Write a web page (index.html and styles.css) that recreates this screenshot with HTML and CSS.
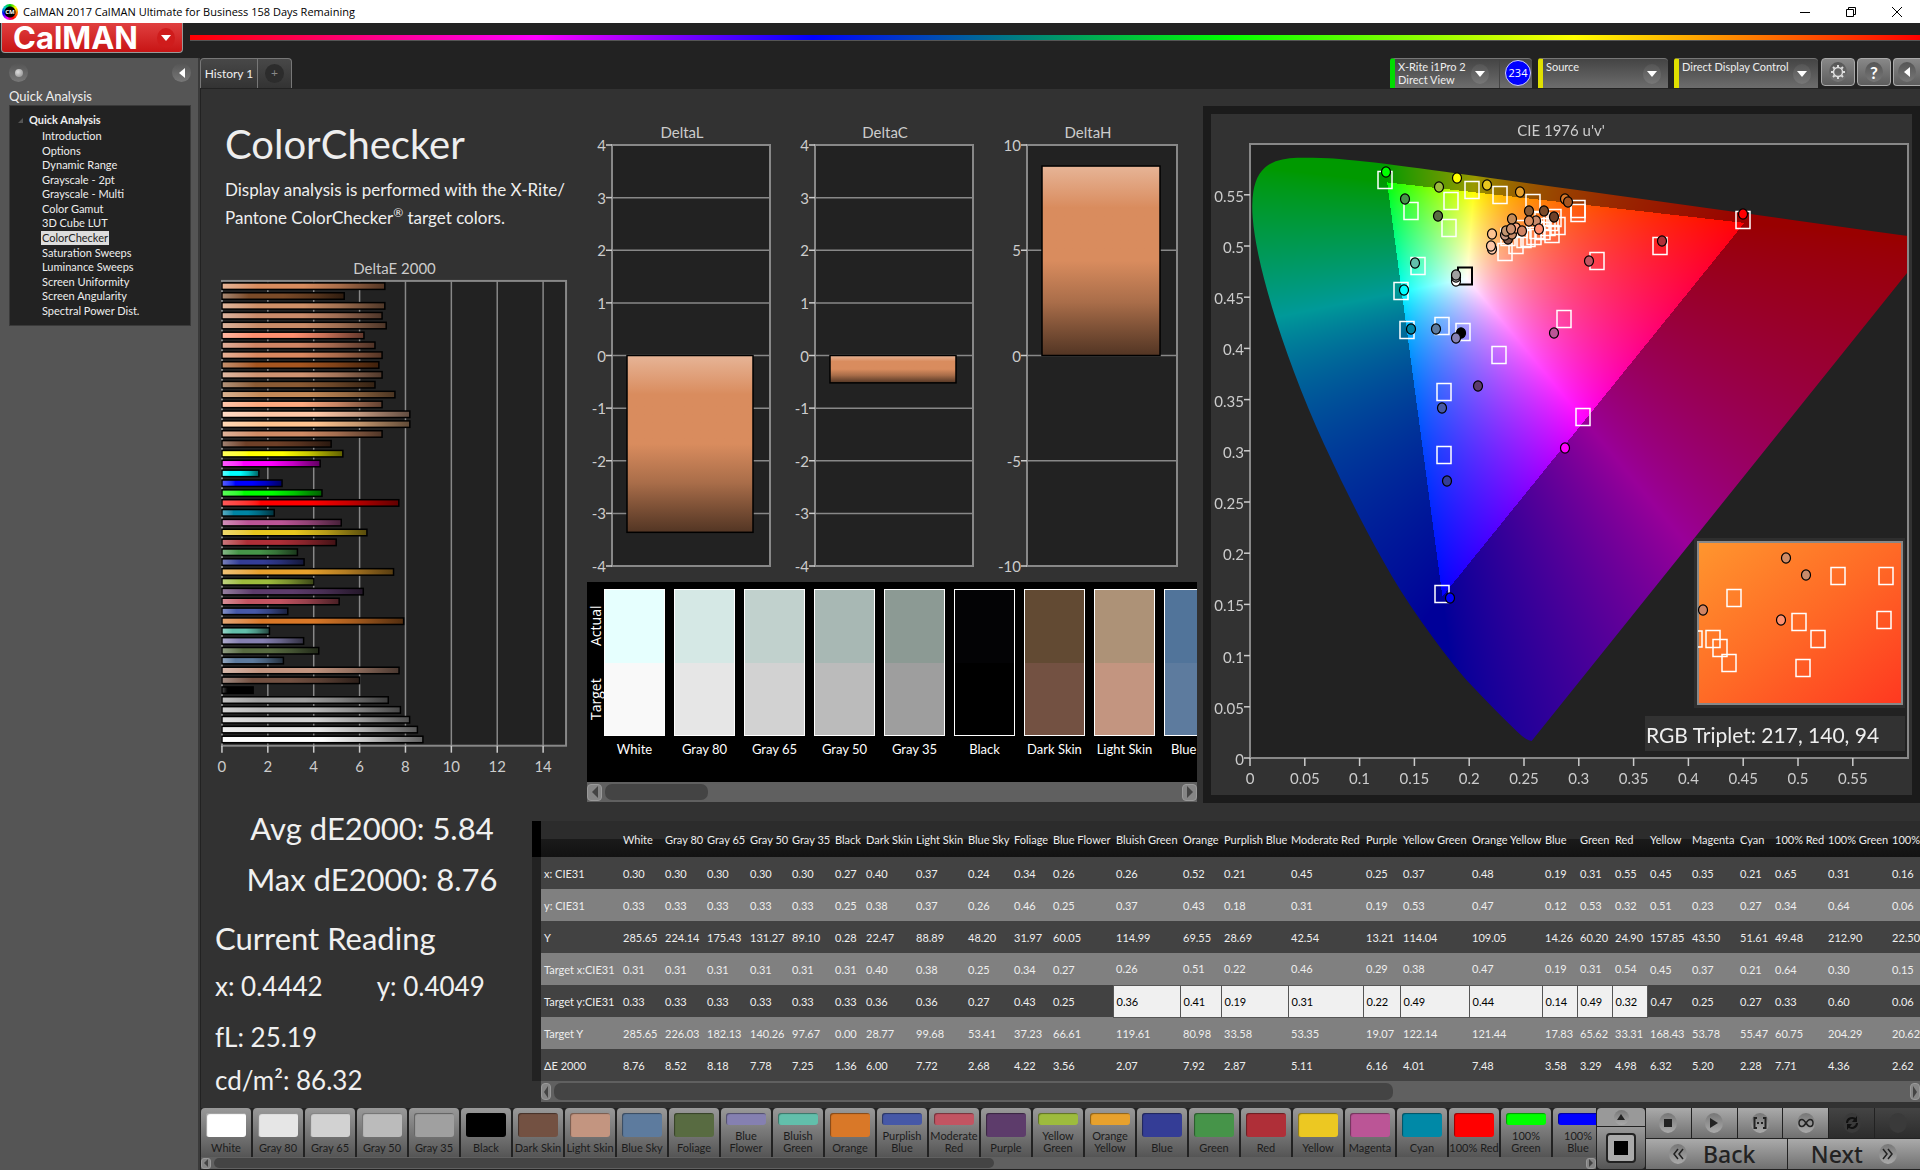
FILE: index.html
```html
<!DOCTYPE html>
<html lang="en">
<head>
<meta charset="utf-8">
<title>CalMAN 2017 CalMAN Ultimate for Business 158 Days Remaining</title>
<link rel="stylesheet" href="styles.css">
</head>
<body>
<header class="titlebar">
  <span class="app-icon">CM</span>
  <span class="title">CalMAN 2017 CalMAN Ultimate for Business 158 Days Remaining</span>
  <div class="window-buttons">
    <button aria-label="Minimize"><svg width="12" height="12"><path d="M1 6.500H11" stroke="#000" fill="none"/></svg></button>
    <button aria-label="Restore"><svg width="12" height="12"><path d="M1.500 3.500h7v7h-7zM3.500 3.500v-2h7v7h-2" stroke="#000" fill="none"/></svg></button>
    <button aria-label="Close"><svg width="12" height="12"><path d="M1 1L11 11M11 1L1 11" stroke="#000" fill="none"/></svg></button>
  </div>
</header>
<div class="brandbar">
  <button class="brand"><span>CalMAN</span><i class="knob"><svg width="10" height="6"><path d="M0 0h10L5 6z" fill="#fff"/></svg></i></button>
  <div class="rainbow"></div>
</div>
<div class="workspace">
  <aside class="sidebar">
    <div class="sidebar-top">
      <button class="round-btn" aria-label="Pin"><i class="led"></i></button>
      <button class="round-btn" aria-label="Collapse"><svg width="6" height="10"><path d="M6 0v10L0 5z" fill="#fff"/></svg></button>
    </div>
    <h2>Quick Analysis</h2>
    <nav class="tree">
      <strong><svg width="5" height="5"><path d="M5 0v5H0z" fill="#555"/></svg>Quick Analysis</strong>
      <ul>
        <li><a href="#">Introduction</a></li>
        <li><a href="#">Options</a></li>
        <li><a href="#">Dynamic Range</a></li>
        <li><a href="#">Grayscale - 2pt</a></li>
        <li><a href="#">Grayscale - Multi</a></li>
        <li><a href="#">Color Gamut</a></li>
        <li><a href="#">3D Cube LUT</a></li>
        <li><a href="#" class="current">ColorChecker</a></li>
        <li><a href="#">Saturation Sweeps</a></li>
        <li><a href="#">Luminance Sweeps</a></li>
        <li><a href="#">Screen Uniformity</a></li>
        <li><a href="#">Screen Angularity</a></li>
        <li><a href="#">Spectral Power Dist.</a></li>
      </ul>
    </nav>
  </aside>
  <main class="main">
    <div class="topbar">
      <div class="tabs">
        <button class="tab">History 1</button>
        <button class="tab tab-add"><i>+</i></button>
      </div>
      <div class="devices">
        <div class="device meter">
          <button class="device-menu"><span>X-Rite i1Pro 2<br>Direct View</span><i class="knob"><svg width="10" height="6"><path d="M0 0h10L5 6z" fill="#fff"/></svg></i></button>
          <span class="badge">234</span>
        </div>
        <div class="device source">
          <button class="device-menu"><span>Source</span><i class="knob"><svg width="10" height="6"><path d="M0 0h10L5 6z" fill="#fff"/></svg></i></button>
        </div>
        <div class="device display">
          <button class="device-menu"><span>Direct Display Control</span><i class="knob"><svg width="10" height="6"><path d="M0 0h10L5 6z" fill="#fff"/></svg></i></button>
        </div>
        <button class="tool" aria-label="Settings"><i class="knob"><svg width="16" height="16" viewBox="0 0 16 16"><circle cx="8" cy="8" r="4.500" fill="none" stroke="#ddd" stroke-width="1.500"/><g stroke="#ddd" stroke-width="2"><path d="M8 1v2M8 13v2M1 8h2M13 8h2M3 3l1.500 1.500M11.500 11.500L13 13M3 13l1.500-1.500M11.500 4.500L13 3"/></g></svg></i></button>
        <button class="tool" aria-label="Help"><i class="knob">?</i></button>
        <button class="tool tool-cut" aria-label="Collapse"><i class="knob"><svg width="6" height="10"><path d="M6 0v10L0 5z" fill="#fff"/></svg></i></button>
      </div>
    </div>

    <div class="page">
      <div class="upper">
        <section class="intro">
          <h1>ColorChecker</h1>
          <p>Display analysis is performed with the X-Rite/<br>Pantone ColorChecker<sup>®</sup> target colors.</p>
          <svg id="deltae" class="chart" viewBox="0 0 387 540"></svg>
        </section>
        <section class="middle">
          <svg id="deltas" class="chart" viewBox="0 0 610 464"></svg>
          <div class="strip">
            <div class="strip-body">
              <div class="strip-side"><span>Actual</span><span>Target</span></div>
              <div class="swatches" id="swatches"></div>
            </div>
            <div class="scrollbar strip-scroll"><button aria-label="Scroll left"><svg width="6" height="12"><path d="M6 0v12L0 6z"/></svg></button><div class="track"><div class="thumb"></div></div><button aria-label="Scroll right"><svg width="6" height="12"><path d="M0 0v12L6 6z"/></svg></button></div>
          </div>
        </section>
        <section class="cie">
          <canvas id="gamut" width="658" height="614"></canvas>
          <svg id="cie" class="chart" viewBox="0 0 701 681"></svg>
        </section>
      </div>

      <div class="lower">
        <section class="stats">
          <p class="big">Avg dE2000: 5.84</p>
          <p class="big">Max dE2000: 8.76</p>
          <p class="heading">Current Reading</p>
          <p class="reading"><span>x: 0.4442</span><span>y: 0.4049</span></p>
          <p class="reading lum">fL: 25.19</p>
          <p class="reading">cd/m²: 86.32</p>
        </section>
        <section class="results">
          <div class="table-wrap"><table id="results"></table></div>
          <div class="scrollbar table-scroll"><button aria-label="Scroll left"><svg width="4" height="12"><path d="M4 0v12L0 6z"/></svg></button><div class="track"><div class="thumb"></div></div><button aria-label="Scroll right"><svg width="4" height="12"><path d="M0 0v12L4 6z"/></svg></button></div>
        </section>
      </div>
    </div>

    <footer class="bottom">
      <div class="patches">
        <div class="patch-row" id="patches"></div>
        <div class="scrollbar patch-scroll"><button aria-label="Scroll left"><svg width="4" height="8"><path d="M4 0v8L0 4z"/></svg></button><div class="track"><div class="thumb"></div></div><button aria-label="Scroll right"><svg width="4" height="8"><path d="M0 0v8L4 4z"/></svg></button></div>
      </div>
      <div class="window-ctl">
        <button class="up" aria-label="Expand"><i class="knob"><svg width="8" height="6"><path d="M0 6h8L4 0z" fill="#222"/></svg></i></button>
        <button class="pattern" aria-label="Pattern window"><i></i></button>
      </div>
      <div class="transport">
        <div class="play-row">
          <button aria-label="Stop"><i class="knob"><svg width="10" height="10"><path d="M1 1h8v8H1z" fill="#222"/></svg></i></button>
          <button aria-label="Play"><i class="knob"><svg width="10" height="12"><path d="M1 1v10l8-5z" fill="#222"/></svg></i></button>
          <button aria-label="Read series"><i class="knob"><svg width="14" height="12"><path d="M4 1H1.500v10H4M10 1h2.500v10H10" stroke="#222" stroke-width="2" fill="none"/><path d="M4 6h2M8 6h2" stroke="#222" stroke-width="2"/></svg></i></button>
          <button aria-label="Read continuous"><i class="knob"><svg width="16" height="10"><path d="M8 5C6 2 5 1.500 4 1.500a3 3.500 0 0 0 0 7C5 8.500 6 8 8 5s3-3.500 4-3.500a3 3.500 0 0 1 0 7c-1 0-2-.5-4-3.500z" stroke="#222" stroke-width="1.500" fill="none"/></svg></i></button>
          <button class="off" aria-label="Refresh"><i class="knob"><svg width="14" height="14"><path d="M2 7a5 5 0 0 1 9-3M12 7a5 5 0 0 1-9 3" stroke="#111" stroke-width="2" fill="none"/><path d="M12 0v6H7zM2 14V8h5z" fill="#111"/></svg></i></button>
          <button class="off" aria-label="Record"><i class="knob"></i></button>
        </div>
        <div class="nav-row">
          <button><i class="knob"><svg width="12" height="12"><path d="M6 1L2 6l4 5M11 1L7 6l4 5" stroke="#222" stroke-width="1.500" fill="none"/></svg></i>Back</button>
          <button>Next<i class="knob"><svg width="12" height="12"><path d="M1 1l4 5-4 5M6 1l4 5-4 5" stroke="#222" stroke-width="1.500" fill="none"/></svg></i></button>
        </div>
      </div>
    </footer>
  </main>
</div>
<script src="app.js"></script>
</body>
</html>
```

FILE: styles.css
```css
* { box-sizing: border-box; }
body {
  margin: 0; min-height: 100vh; display: flex; flex-direction: column; overflow-x: hidden;
  background: #222; color: #eee;
  font-family: Lato, sans-serif; font-size: 13px;
}
button { font: inherit; color: inherit; border: 0; padding: 0; margin: 0; background: none; }
h1, h2, p, ul { margin: 0; padding: 0; font-weight: normal; list-style: none; }
i { font-style: normal; }
a { color: inherit; text-decoration: none; }
svg { display: block; flex: none; }

.titlebar { height: 23px; background: #fff; color: #000; display: flex; align-items: center; font-family: "Open Sans", sans-serif; font-size: 11px; }
.app-icon {
  width: 16px; height: 16px; margin: 0 5px 0 2px; border-radius: 50%; color: #fff; font-size: 6px; font-weight: bold;
  display: flex; align-items: center; justify-content: center;
  background: radial-gradient(circle, #000 5px, transparent 6px), conic-gradient(#0c0, #ff0, #f60, #f00, #f0f, #00f, #0cc, #0c0);
}
.title { flex: 1; }
.window-buttons { display: flex; }
.window-buttons button { width: 46px; height: 22px; display: flex; align-items: center; justify-content: center; }

.brandbar { height: 35px; display: flex; padding-left: 1px; }
.brand {
  width: 182px; height: 30px; display: flex; align-items: center; justify-content: space-between; padding: 0 7px 0 11px;
  background: linear-gradient(#e04040, #c81414); border: 1px solid #999; border-top: 0; border-radius: 0 0 4px 4px;
  font-family: Inter, sans-serif; font-weight: 700; font-size: 31px; line-height: 30px; color: #fff;
}
.knob {
  width: 18px; height: 20px; border-radius: 50%; display: flex; flex: none; align-items: center; justify-content: center;
  background: linear-gradient(#555, #777);
}
.brand .knob { background: #cf1c1c; }
.rainbow { flex: 1; height: 6px; margin: 12px 0 0 7px; background: linear-gradient(90deg, #f00, #f0f 20%, #00f 36%, #0f0 60%, #ff0 80%, #f00); border-bottom: 1px solid #555; }

.workspace { flex: 1; display: flex; }
.sidebar { width: 200px; flex: none; background: #555; padding: 5px 7px 5px 9px; border-right: 2px solid #3a3a3a; }
.sidebar-top { display: flex; justify-content: space-between; }
.round-btn { width: 19px; height: 19px; border-radius: 50%; display: flex; align-items: center; justify-content: center; background: linear-gradient(#555, #777); }
.led { width: 8px; height: 8px; border-radius: 50%; background: radial-gradient(circle at 3px 3px, #ddd, #888); }
.sidebar h2 { font-size: 13px; line-height: 17px; margin: 6px 0 0; }
.tree { height: 221px; background: #222; border: 1px solid #3a3a3a; padding: 5px 0 7px 8px; display: flex; flex-direction: column; font-size: 11px; }
.tree strong { display: flex; align-items: center; gap: 6px; line-height: 18px; }
.tree ul { flex: 1; display: flex; flex-direction: column; justify-content: space-between; padding: 0 0 0 23px; }
.tree li { line-height: 14px; }
.tree a { padding: 0 1px; display: inline-block; }
.tree .current { background: #ddd; color: #222; }

.main { flex: 1; min-width: 0; display: flex; flex-direction: column; }
.topbar { height: 30px; display: flex; justify-content: space-between; overflow: hidden; }
.tabs, .devices { display: flex; }
.tab { width: 58px; border: 1px solid #777; border-bottom: 0; border-radius: 4px 0 0 0; background: linear-gradient(#484848, #333); font-size: 12px; white-space: nowrap; }
.tab-add { width: 34px; border-left: 0; border-radius: 0 4px 0 0; display: flex; align-items: center; justify-content: center; color: #888; }
.tab-add i { width: 19px; height: 19px; line-height: 18px; border-radius: 50%; background: #2c2c2c; }
.device { display: flex; height: 30px; background: linear-gradient(#444, #6d6d6d); border-top: 1px solid #777; border-left: 5px solid #e0e000; border-radius: 3px 4px 0 0; margin-right: 6px; }
.meter { width: 142px; border-left-color: #0d0; }
.source { width: 130px; }
.display { width: 144px; margin-right: 3px; }
.device-menu { flex: 1; display: flex; justify-content: space-between; align-items: flex-start; text-align: left; font-size: 11px; line-height: 13px; padding: 1px 7px 0 3px; white-space: nowrap; }
.meter .device-menu { padding-right: 10px; border-right: 1px solid #444; }
.device-menu .knob { margin: 4px 0 0; }
.badge { width: 26px; height: 26px; flex: none; margin: 1px 1px 0 5px; border-radius: 50%; background: #00f; border: 1px solid #ccf; color: #fff; font: 11px/24px "Open Sans", sans-serif; text-align: center; }
.tool { width: 34px; height: 28px; margin-right: 2px; display: flex; align-items: center; justify-content: center; border: 1px solid #aaa; border-radius: 4px; background: linear-gradient(#888, #5d5d5d); font-weight: bold; font-size: 17px; color: #fff; }
.tool-cut { width: 27px; margin: 0; border-right: 0; border-radius: 4px 0 0 4px; }

.page { flex: 1; background: #323232; border-top: 1px solid #222; border-left: 1px solid #222; padding-bottom: 6px; }
.upper { display: grid; grid-template-columns: minmax(0, 380fr) minmax(0, 610fr) minmax(0, 717fr); column-gap: 6px; padding-top: 17px; }
.chart { width: 100%; height: auto; overflow: visible; }
.intro { padding-top: 8px; margin-right: -6px; }
.intro h1 { font-size: 40px; line-height: 60px; padding-left: 24px; }
.intro p { font-size: 17px; line-height: 28px; padding-left: 24px; white-space: nowrap; margin: 2px 0 18px; }
.intro sup { font-size: 12px; line-height: 0; }
.middle { padding-top: 12px; }
.strip { background: #000; overflow: hidden; }
.strip-body { height: 200px; display: flex; padding-top: 7px; }
.strip-side { width: 17px; height: 147px; flex: none; display: flex; flex-direction: column; justify-content: space-between; align-items: center; }
.strip-side span { writing-mode: vertical-rl; transform: rotate(180deg); height: 73px; text-align: center; font: 14px/17px "Open Sans", sans-serif; color: #fff; }
.swatches { display: flex; gap: 9px; flex: 1; min-width: 0; overflow: hidden; }
.swatch { width: 61px; flex: none; display: flex; flex-direction: column; text-align: center; font-size: 13px; line-height: 18px; color: #fff; white-space: nowrap; }
.swatch .chip { height: 147px; border: 1px solid #fff; margin-bottom: 4px; display: flex; flex-direction: column; }
.swatch:last-child { text-align: left; text-indent: 7px; }
.chip span { flex: 1; }
.scrollbar { background: #606060; display: flex; align-items: center; }
.scrollbar button { flex: none; background: #858585; border: 1px solid #999; border-radius: 4px; display: flex; align-items: center; justify-content: center; }
.scrollbar path { fill: #444; }
.track { flex: 1; align-self: stretch; padding: 2px 3px; }
.thumb { height: 100%; background: #444; border-radius: 7px; }
.strip-scroll { height: 20px; }
.strip-scroll button { width: 15px; height: 17px; }
.strip-scroll .thumb { width: 103px; }
.cie { position: relative; border: 8px solid #1b1b1b; align-self: start; }
.cie canvas { position: absolute; left: 5.563%; top: 4.405%; width: 93.866%; height: 90.162%; }
.cie .chart { position: relative; }

.lower { display: flex; padding-top: 18px; }
.stats { width: 331px; flex: none; padding-left: 14px; margin-top: -18px; color: #f0f0f0; }
.big { width: 300px; text-align: center; font-size: 31px; line-height: 51px; margin-left: 7px; }
.heading { font-size: 31px; line-height: 50px; margin-top: 8px; }
.reading { font-size: 26px; line-height: 43px; display: flex; gap: 54px; }
.heading + .reading { margin-top: 2px; }
.lum { margin-top: 8px; }
.results { flex: 1; min-width: 0; }
.table-wrap { overflow: hidden; }
table { table-layout: fixed; border-collapse: collapse; font-size: 11px; width: 1395px; }
th, td { padding: 0 0 0 3px; text-align: left; font-weight: normal; white-space: nowrap; height: 32px; }
thead th { height: 36px; }
thead tr { background: linear-gradient(#2c2c2c 50%, #1a1a1a 50%, #121212); }
tbody tr { background: #424242; }
tbody tr:nth-child(even) { background: #808080; }
.gutter, tbody tr:nth-child(even) .gutter { background: #222; }
thead .gutter { background: #000; }
td.picked { background: #f0f0f0; color: #000; border: 1px solid #555; }
.table-scroll { height: 21px; margin-left: 9px; }
.table-scroll button { width: 10px; height: 17px; }
.table-scroll .thumb { width: 62%; }

.bottom { height: 62px; display: flex; background: #222; overflow: hidden; }
.patches { flex: 1; min-width: 0; padding-left: 1px; overflow: hidden; }
.patch-row { height: 49px; display: flex; gap: 2px; overflow: hidden; }
.patch { width: 50px; flex: none; border-radius: 4px 4px 0 0; background: linear-gradient(#999, #555); color: #1c1c1c; font-size: 11px; line-height: 12px; display: flex; flex-direction: column; align-items: center; justify-content: space-between; padding: 5px 0 3px; white-space: nowrap; }
.patch .ink { width: 40px; border-radius: 3px; flex: 1; margin-bottom: 5px; box-shadow: inset 1px 1px 1px #0006; }
.patch-scroll { height: 12px; }
.patch-scroll button { width: 10px; height: 11px; border-radius: 3px; }
.patch-scroll .track { padding: 1px 3px; }
.patch-scroll .thumb { width: 57%; border-radius: 5px; }
.window-ctl { width: 48px; margin: 0 1px; display: flex; flex-direction: column; gap: 1px; }
.up { height: 18px; display: flex; align-items: center; justify-content: center; background: #999; border-radius: 4px 4px 0 0; }
.up .knob { width: 15px; height: 15px; }
.pattern { height: 42px; display: flex; align-items: center; justify-content: center; background: linear-gradient(#999, #555); border-radius: 0 0 4px 4px; }
.pattern i { width: 30px; height: 30px; border: 2px solid #222; border-radius: 4px; background: linear-gradient(#000, #000) center / 14px 14px no-repeat, #aaa; }
.transport { width: 274px; display: flex; flex-direction: column; gap: 1px; }
.play-row, .nav-row { display: flex; gap: 1px; height: 30px; }
.play-row button, .nav-row button { flex: 1; display: flex; align-items: center; justify-content: center; background: linear-gradient(#aaa, #707070); }
.bottom .knob { background: linear-gradient(#777, #aaa); }
.play-row .off { background: linear-gradient(#444, #2c2c2c); }
.play-row .off .knob { background: #3a3a3a; }
.nav-row button { font: 500 23px/28px "Noto Sans", sans-serif; color: #222; gap: 16px; }
.nav-row button:first-child { padding-right: 8px; }
```

FILE: app.js
```js
const NS = 'http://www.w3.org/2000/svg';
function el(parent, name, attrs, text) {
  const n = document.createElementNS(NS, name);
  for (const k in attrs) n.setAttribute(k, attrs[k]);
  if (text !== undefined) n.textContent = text;
  parent.appendChild(n);
  return n;
}
const line = (p, x1, y1, x2, y2, c) => el(p, 'path', { d: `M${x1} ${y1}L${x2} ${y2}`, stroke: c || '#888', 'stroke-width': 1.5, fill: 'none' });
const label = (p, x, y, t, anchor, size) => el(p, 'text', { x, y, 'text-anchor': anchor || 'middle', 'font-size': size || 15, fill: '#ccc' }, t);
const frame = (p, x, y, w, h, fill) => el(p, 'rect', { x, y, width: w, height: h, fill: fill || '#222', stroke: '#888', 'stroke-width': 2 });

// Glossy fill that fades from a tinted start to a dark end
let gid = 0;
function glossy(svg, color, vertical) {
  const id = 'g' + gid++;
  const g = el(svg, 'linearGradient', { id, x1: 0, y1: 0, x2: vertical ? 0 : 1, y2: vertical ? 1 : 0 });
  const mix = (a, b) => `color-mix(in srgb, ${color} ${a}%, ${b})`;
  [[0, mix(65, 'white')], [0.22, color], [0.5, color], [0.72, mix(78, 'black')], [1, mix(38, 'black')]].forEach(s => {
    el(g, 'stop', { offset: s[0] }).style.stopColor = s[1];
  });
  return `url(#${id})`;
}

// DeltaE 2000 per patch
const dE = [
  [7.1, '#d98c5e'], [5.33, '#7a4a28'], [7.1, '#cf9068'], [6.98, '#c98b6b'], [7.16, '#c88b68'], [6.19, '#ff9070'], [6.67, '#cf8464'], [6.98, '#d98860'],
  [6.84, '#a55520'], [6.98, '#cf9472'], [6.67, '#8a5a34'], [7.54, '#c48a58'], [6.98, '#ffaa80'], [8.19, '#ffc8a8'], [8.19, '#ffc490'], [6.98, '#d08c66'],
  [4.76, '#6e4028'], [5.27, '#ffff00'], [4.28, '#ff00ff'], [1.61, '#00ffff'], [2.62, '#0000ff'], [4.36, '#00ff00'], [7.71, '#ff0000'], [2.28, '#0085a3'],
  [5.2, '#bb5596'], [6.32, '#e8c71f'], [4.98, '#af2f38'], [3.29, '#469449'], [3.58, '#343d96'], [7.48, '#e7a12d'], [4.01, '#9dbb3d'], [6.16, '#5d3c6b'],
  [5.11, '#c25462'], [2.87, '#4658a7'], [7.92, '#d97828'], [2.07, '#62bfab'], [3.56, '#8580b1'], [4.22, '#586b41'], [2.68, '#5d7b9e'], [7.72, '#c39580'],
  [6, '#735142'], [1.36, '#000000'], [7.25, '#a0a0a0'], [7.78, '#bbbbbb'], [8.18, '#d2d2d2'], [8.52, '#e6e6e6'], [8.76, '#ffffff']
];
{
  const s = document.getElementById('deltae'), L = 21, T = 31, H = 466, U = 23;
  label(s, 194, 24, 'DeltaE 2000');
  frame(s, L, T, 345, H);
  for (let v = 0; v < 15; v += 2) {
    line(s, L + v * U, T, L + v * U, T + H);
    line(s, L + v * U, T + H, L + v * U, T + H + 7, '#ccc');
    label(s, L + v * U, T + H + 26, v);
  }
  dE.forEach((d, i) => el(s, 'rect', { x: L, y: T + 2 + i * 9.88, width: d[0] * U, height: 6.5, fill: glossy(s, d[1]), stroke: '#000', 'stroke-width': 1.5 }));
}

// DeltaL, DeltaC and DeltaH columns
{
  const s = document.getElementById('deltas'), T = 27, H = 421;
  [['DeltaL', 25, 158, 4, 1, -3.36, 95, 40, 126], ['DeltaC', 228, 158, 4, 1, -0.52, 298, 243, 126], ['DeltaH', 440, 150, 10, 5, 9, 501, 455, 118]].forEach(c => {
    const [name, x, w, max, step, val, tx, bx, bw] = c;
    label(s, tx, 20, name);
    frame(s, x, T, w, H);
    for (let v = max; v >= -max; v -= step) {
      const y = T + (max - v) / (2 * max) * H;
      line(s, x, y, x + w, y);
      line(s, x - 6, y, x, y, '#ccc');
      label(s, x - 6, y + 6, v, 'end');
    }
    const mid = T + H / 2, h = Math.abs(val) / (2 * max) * H;
    el(s, 'rect', { x: bx, y: val < 0 ? mid : mid - h, width: bw, height: h, fill: glossy(s, '#d98c5e', true), stroke: '#000', 'stroke-width': 1.5 });
  });
}

// Chromaticity diagram: u'v' plane from 0 to 0.6 on both axes
{
  const xy = [[.1741, .005], [.1714, .0051], [.1644, .0109], [.1566, .0177], [.144, .0297], [.1241, .0578], [.1096, .0868], [.0913, .1327], [.0687, .2007], [.0454, .295], [.0235, .4127], [.0082, .5384], [.0039, .6548], [.0139, .7502], [.0389, .812], [.0743, .8338], [.1142, .8262], [.1547, .8059], [.1929, .7816], [.2296, .7543], [.3016, .6923], [.3731, .6245], [.4441, .5547], [.5125, .4866], [.5752, .4242], [.627, .3725], [.6658, .334], [.6915, .3083], [.719, .2809], [.7347, .2653]];
  const c = document.getElementById('gamut'), W = c.width, H = c.height, g = c.getContext('2d');
  const off = document.createElement('canvas'); off.width = W; off.height = H;
  const og = off.getContext('2d'), img = og.createImageData(W, H);
  for (let j = 0; j < H; j++) for (let i = 0; i < W; i++) {
    const u = (i + .5) / W * .6, v = (1 - (j + .5) / H) * .6;
    const d = 6 * u - 16 * v + 12, x = 9 * u / d, y = 4 * v / d;
    const X = x / y, Z = (1 - x - y) / y;
    let rgb = [3.2406 * X - 1.5372 - .4986 * Z, -.9689 * X + 1.8758 + .0415 * Z, .0557 * X - .204 + 1.057 * Z];
    const k = Math.min(...rgb) < 0 ? .6 : 1, m = Math.max(...rgb), p = (j * W + i) * 4;
    rgb.forEach((q, n) => { img.data[p + n] = 255 * k * Math.pow(Math.max(0, q / m), .8); });
    img.data[p + 3] = 255;
  }
  og.putImageData(img, 0, 0);
  g.fillStyle = '#222'; g.fillRect(0, 0, W, H);
  g.beginPath();
  const pts = xy.map(([x, y]) => { const d = -2 * x + 12 * y + 3; return [4 * x / d / .6 * W, (1 - 9 * y / d / .6) * H]; });
  g.moveTo(...pts[0]);
  for (let i = 1; i < pts.length - 1; i++) g.quadraticCurveTo(...pts[i], (pts[i][0] + pts[i + 1][0]) / 2, (pts[i][1] + pts[i + 1][1]) / 2);
  g.lineTo(...pts[pts.length - 1]);
  g.closePath(); g.clip(); g.drawImage(off, 0, 0);

  const s = document.getElementById('cie'), L = 39, T = 30;
  label(s, 350, 22, "CIE 1976 u'v'");
  frame(s, L, T, W, H, 'none');
  for (let n = 0; n < 12; n++) {
    const t = String(+(n * .05).toFixed(2)), x = L + n * 54.8, y = T + H - n * 51.2;
    line(s, x, T + H, x, T + H + 8, '#ccc'); label(s, x, T + H + 26, t);
    line(s, L - 6, y, L, y, '#ccc'); label(s, L - 6, y + 7, t, 'end');
  }
  const sq = (x, y, col) => el(s, 'rect', { x: x - 7, y: y - 8.5, width: 14, height: 17, fill: 'none', stroke: col || '#fff', 'stroke-width': col ? 2 : 1.5 });
  const dot = (x, y, col) => el(s, 'ellipse', { cx: x, cy: y, rx: 4.5, ry: 5.2, fill: col, stroke: '#000', 'stroke-width': 1.2 });
  [[174, 66], [200, 97], [238, 114], [240, 87], [261, 76], [289, 81], [322, 89], [367, 95], [367, 99], [347, 112], [449, 132], [386, 147], [353, 205], [294, 138], [305, 131], [231, 212], [252, 218], [288, 241], [207, 152], [190, 177], [196, 216], [532, 106], [233, 278], [372, 303], [233, 341], [231, 480],
    [297, 123], [313, 125], [317, 124], [323, 122], [326, 116], [332, 117], [337, 113], [341, 120], [343, 104], [331, 107], [309, 115], [340, 108]].forEach(a => sq(...a));
  sq(254, 162, '#000');
  [[246, 64, '#ffff00'], [228, 73, '#9dbb3d'], [276, 71, '#e8c71f'], [309, 78, '#e7a12d'], [227, 102, '#586b41'], [354, 85, '#d97828'], [357, 88, '#a55520'], [333, 97, '#7a4a28'], [343, 103, '#6e4028'], [318, 97, '#8a5a34'], [325, 107, '#c98b6b'], [318, 107, '#d98c5e'], [301, 105, '#c48a58'], [281, 120, '#ffc490'], [281, 135, '#ffc8a8'], [280, 132, '#ffc8a8'], [297, 125, '#735142'], [294, 121, '#c39580'], [301, 120, '#c88b68'], [305, 114, '#ffaa80'], [295, 117, '#c39570'], [300, 115, '#cf9472'], [311, 117, '#cf8464'], [328, 115, '#ff9070'],
    [245, 167, '#ffffff'], [245, 163, '#dddddd'], [245, 161, '#a0a0a0'], [225, 215, '#5d7b9e'], [250, 219, '#000'], [245, 224, '#8580b1'], [343, 219, '#bb5596'], [378, 147, '#c25462'], [451, 127, '#af2f38'], [175, 58, '#00ff00'], [194, 85, '#469449'], [204, 149, '#62bfab'], [193, 176, '#00ffff'], [200, 215, '#0085a3'], [532, 100, '#ff0000'], [267, 272, '#5d3c6b'], [231, 294, '#4658a7'], [354, 334, '#ff00ff'], [236, 367, '#343d96'], [239, 484, '#0000ff']].forEach(a => dot(...a));

  // Magnified area around the selected patch
  el(s, 'rect', { x: 483, y: 424, width: 211, height: 170, fill: '#2e2e2e' });
  const gr = el(s, 'linearGradient', { id: 'inset', x1: 0, y1: 0, x2: 1, y2: 1 });
  [[0, '#ff962e'], [.5, '#ff6a26'], [1, '#ff3820']].forEach(a => el(gr, 'stop', { offset: a[0], 'stop-color': a[1] }));
  frame(s, 487, 428, 204, 162, 'url(#inset)');
  [[627, 462], [675, 462], [523, 484], [588, 508], [673, 506], [607, 525], [502, 525], [509, 534], [518, 549], [592, 554]].forEach(a => sq(...a));
  el(s, 'path', { d: 'M487 517h4v16h-4', fill: 'none', stroke: '#fff', 'stroke-width': 1.5 });
  [[575, 444, '#d08c66'], [595, 461, '#c98b6b'], [492, 496, '#cf8464'], [570, 506, '#ff9070']].forEach(a => dot(...a));
  el(s, 'rect', { x: 434, y: 602, width: 260, height: 35, fill: '#323232' });
  label(s, 435, 629, 'RGB Triplet: 217, 140, 94', 'start', 21).style.fill = '#eee';
}

// Actual / target swatches
[['White', '#e6fffe', '#f9f9f9'], ['Gray 80', '#d5e8e5', '#e6e6e6'], ['Gray 65', '#c1d1cd', '#d2d2d2'], ['Gray 50', '#a8b8b4', '#bbb'], ['Gray 35', '#8c9a94', '#9e9e9e'], ['Black', '#030305', '#000'], ['Dark Skin', '#624a33', '#735142'], ['Light Skin', '#ad9277', '#c39580'], ['Blue', '#51749a', '#5d7b9e']].forEach(([n, a, t]) => {
  document.getElementById('swatches').insertAdjacentHTML('beforeend', `<div class="swatch"><div class="chip"><span style="background:${a}"></span><span style="background:${t}"></span></div>${n}</div>`);
});

// Results table
const cols = [['White', 42], ['Gray 80', 42], ['Gray 65', 43], ['Gray 50', 42], ['Gray 35', 43], ['Black', 31], ['Dark Skin', 50], ['Light Skin', 52], ['Blue Sky', 46], ['Foliage', 39], ['Blue Flower', 63], ['Bluish Green', 67], ['Orange', 41], ['Purplish Blue', 67], ['Moderate Red', 75], ['Purple', 37], ['Yellow Green', 69], ['Orange Yellow', 73], ['Blue', 35], ['Green', 35], ['Red', 35], ['Yellow', 42], ['Magenta', 48], ['Cyan', 35], ['100% Red', 53], ['100% Green', 64], ['100%', 63]];
const rows = [
  ['x: CIE31', '0.30 0.30 0.30 0.30 0.30 0.27 0.40 0.37 0.24 0.34 0.26 0.26 0.52 0.21 0.45 0.25 0.37 0.48 0.19 0.31 0.55 0.45 0.35 0.21 0.65 0.31 0.16'],
  ['y: CIE31', '0.33 0.33 0.33 0.33 0.33 0.25 0.38 0.37 0.26 0.46 0.25 0.37 0.43 0.18 0.31 0.19 0.53 0.47 0.12 0.53 0.32 0.51 0.23 0.27 0.34 0.64 0.06'],
  ['Y', '285.65 224.14 175.43 131.27 89.10 0.28 22.47 88.89 48.20 31.97 60.05 114.99 69.55 28.69 42.54 13.21 114.04 109.05 14.26 60.20 24.90 157.85 43.50 51.61 49.48 212.90 22.50'],
  ['Target x:CIE31', '0.31 0.31 0.31 0.31 0.31 0.31 0.40 0.38 0.25 0.34 0.27 0.26 0.51 0.22 0.46 0.29 0.38 0.47 0.19 0.31 0.54 0.45 0.37 0.21 0.64 0.30 0.15'],
  ['Target y:CIE31', '0.33 0.33 0.33 0.33 0.33 0.33 0.36 0.36 0.27 0.43 0.25 0.36 0.41 0.19 0.31 0.22 0.49 0.44 0.14 0.49 0.32 0.47 0.25 0.27 0.33 0.60 0.06'],
  ['Target Y', '285.65 226.03 182.13 140.26 97.67 0.00 28.77 99.68 53.41 37.23 66.61 119.61 80.98 33.58 53.35 19.07 122.14 121.44 17.83 65.62 33.31 168.43 53.78 55.47 60.75 204.29 20.62'],
  ['ΔE 2000', '8.76 8.52 8.18 7.78 7.25 1.36 6.00 7.72 2.68 4.22 3.56 2.07 7.92 2.87 5.11 6.16 4.01 7.48 3.58 3.29 4.98 6.32 5.20 2.28 7.71 4.36 2.62']
];
document.getElementById('results').innerHTML =
  '<colgroup><col style="width:9px"><col style="width:79px">' + cols.map(c => `<col style="width:${c[1]}px">`).join('') + '</colgroup>' +
  '<thead><tr><th class="gutter"></th><th></th>' + cols.map(c => `<th scope="col">${c[0]}</th>`).join('') + '</tr></thead><tbody>' +
  rows.map((r, k) => `<tr><td class="gutter"></td><th scope="row">${r[0]}</th>` + r[1].split(' ').map((v, i) => `<td${k === 4 && i > 10 && i < 21 ? ' class="picked"' : ''}>${v}</td>`).join('') + '</tr>').join('') + '</tbody>';

// Patch buttons
[['White', '#fff'], ['Gray 80', '#e6e6e6'], ['Gray 65', '#d2d2d2'], ['Gray 50', '#bbb'], ['Gray 35', '#a0a0a0'], ['Black', '#000'], ['Dark Skin', '#735142'], ['Light Skin', '#c39580'], ['Blue Sky', '#5d7b9e'], ['Foliage', '#586b41'], ['Blue<br>Flower', '#8580b1'], ['Bluish<br>Green', '#62bfab'], ['Orange', '#d97828'], ['Purplish<br>Blue', '#4658a7'], ['Moderate<br>Red', '#c25462'], ['Purple', '#5d3c6b'], ['Yellow<br>Green', '#9dbb3d'], ['Orange<br>Yellow', '#e7a12d'], ['Blue', '#343d96'], ['Green', '#469449'], ['Red', '#af2f38'], ['Yellow', '#ecc822'], ['Magenta', '#bb5596'], ['Cyan', '#0089a7'], ['100% Red', '#f00'], ['100%<br>Green', '#0f0'], ['100%<br>Blue', '#00f']].forEach(([n, c]) => {
  document.getElementById('patches').insertAdjacentHTML('beforeend', `<button class="patch"><span class="ink" style="background:${c}"></span><span>${n}</span></button>`);
});
```
